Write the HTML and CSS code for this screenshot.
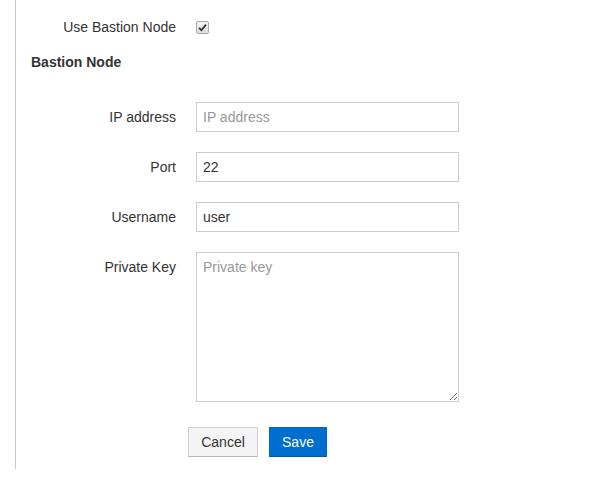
FILE: index.html
```html
<!DOCTYPE html>
<html>
<head>
<meta charset="utf-8">
<link rel="stylesheet" href="styles.css">
</head>
<body>
<div class="page">
  <div class="row check-row">
    <div class="label">Use Bastion Node</div>
    <div class="field">
      <span class="checkbox"><svg width="9" height="9" viewBox="0 0 9 9"><path d="M1 4.8 L3.4 7.2 L8 1.6" fill="none" stroke="#333" stroke-width="1.8"/></svg></span>
    </div>
  </div>
  <h3 class="section">Bastion Node</h3>
  <div class="form">
    <div class="row">
      <div class="label">IP address</div>
      <div class="field"><input class="input" type="text" placeholder="IP address"></div>
    </div>
    <div class="row">
      <div class="label">Port</div>
      <div class="field"><input class="input" type="text" value="22"></div>
    </div>
    <div class="row">
      <div class="label">Username</div>
      <div class="field"><input class="input" type="text" value="user"></div>
    </div>
    <div class="row">
      <div class="label">Private Key</div>
      <div class="field"><textarea class="textarea" placeholder="Private key"></textarea></div>
    </div>
  </div>
  <div class="actions">
    <button class="btn btn-default">Cancel</button>
    <button class="btn btn-primary">Save</button>
  </div>
</div>
</body>
</html>
```
FILE: styles.css
```css
* { box-sizing: border-box; }
html, body { margin: 0; padding: 0; background: #fff; }
body {
  font-family: "Liberation Sans", Arial, sans-serif;
  font-size: 14px;
  color: #333;
}
.page {
  margin-left: 15px;
  border-left: 1px solid #c8c8c8;
  height: 469px;
  padding-top: 17px;
}
.row {
  display: flex;
  align-items: flex-start;
}
.label {
  width: 180px;
  padding-right: 20px;
  text-align: right;
  line-height: 30px;
  color: #333;
}
.check-row .label { line-height: 20px; }
.field { display: flex; }
.check-row .field { height: 20px; align-items: center; }
.checkbox {
  width: 13px;
  height: 13px;
  border: 1px solid #a8a8a8;
  border-radius: 2px;
  background: linear-gradient(#f4f4f4, #dcdcdc);
  display: flex;
  align-items: center;
  justify-content: center;
}
.checkbox svg { display: block; }
.section {
  margin: 15px 0 0 15px;
  font-size: 14px;
  line-height: 20px;
  font-weight: bold;
  color: #333;
}
.form {
  margin-top: 30px;
  display: flex;
  flex-direction: column;
  gap: 20px;
}
.input, .textarea {
  width: 263px;
  border: 1px solid #ccc;
  font-family: "Liberation Sans", Arial, sans-serif;
  font-size: 14px;
  color: #333;
  padding: 0 6px;
  margin: 0;
  outline: none;
  background: #fff;
}
.input { height: 30px; }
.textarea {
  height: 150px;
  padding-top: 5px;
  line-height: 18px;
  resize: vertical;
}
.input::placeholder, .textarea::placeholder { color: #999; opacity: 1; }
.actions {
  margin-top: 25px;
  padding-left: 172px;
  display: flex;
  gap: 11px;
}
.btn {
  height: 30px;
  font-family: "Liberation Sans", Arial, sans-serif;
  font-size: 14px;
  padding: 0;
  margin: 0;
  cursor: pointer;
}
.btn-default {
  width: 70px;
  background: #f4f4f4;
  color: #333;
  border: 1px solid #d0d0d0;
  border-bottom-color: #b8b8b8;
}
.btn-primary {
  width: 58px;
  background: #006ecf;
  color: #fff;
  border: 1px solid #0068c4;
  border-bottom-color: #0058a6;
}
```
